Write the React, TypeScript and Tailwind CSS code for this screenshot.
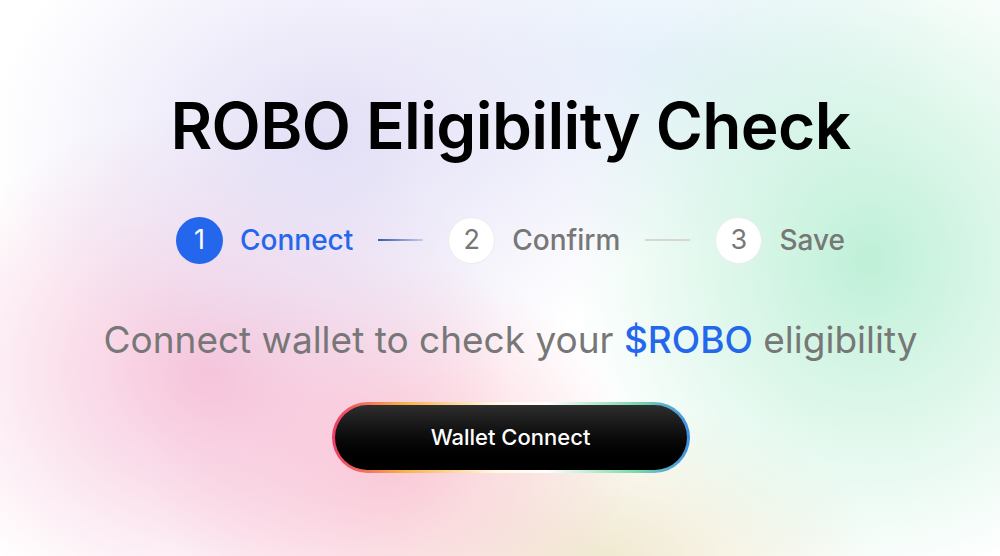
import React from "react";

const steps = [
  { n: 1, label: "Connect", active: true },
  { n: 2, label: "Confirm", active: false },
  { n: 3, label: "Save", active: false },
];

const App: React.FC = () => {
  return (
    <div
      className="relative w-full h-[556px] overflow-hidden bg-white"
      style={{ fontFamily: "Inter, 'Liberation Sans', sans-serif" }}
    >
      {/* soft colour blobs behind everything */}
      <div className="absolute inset-0 bg-[radial-gradient(ellipse_340px_260px_at_330px_140px,#e2def6_0%,rgba(226,222,246,0)_100%),radial-gradient(ellipse_300px_260px_at_210px_370px,#f6c3da_0%,rgba(246,195,218,0)_100%),radial-gradient(ellipse_240px_200px_at_390px_460px,#fbcad6_0%,rgba(251,202,214,0)_100%),radial-gradient(ellipse_300px_330px_at_870px_260px,#bff0d8_0%,rgba(191,240,216,0)_100%),radial-gradient(ellipse_280px_160px_at_600px_560px,#f0e9d0_0%,rgba(240,233,208,0)_100%),radial-gradient(ellipse_300px_200px_at_650px_60px,#e6f1fb_0%,rgba(230,241,251,0)_100%)]" />

      <div className="relative flex flex-col items-center pt-[86px] pl-[21px]">
        <h1 className="text-[64px] leading-[80px] font-semibold text-black tracking-[-0.6px]">
          ROBO Eligibility Check
        </h1>

        {/* stepper */}
        <div className="flex items-center mt-[50px] h-[48px]">
          {steps.map((s, i) => (
            <React.Fragment key={s.n}>
              <div className="flex items-center">
                <div
                  className={
                    s.active
                      ? "w-[47px] h-[47px] rounded-full bg-[#2567ec] text-white flex items-center justify-center text-[27px]"
                      : "w-[47px] h-[47px] rounded-full bg-white border border-[#ececec] text-[#777] flex items-center justify-center text-[27px]"
                  }
                >
                  {s.n}
                </div>
                <span
                  className={
                    s.active
                      ? "ml-[17px] text-[28px] font-medium text-[#2567ec]"
                      : "ml-[17px] text-[28px] font-medium text-[#777]"
                  }
                >
                  {s.label}
                </span>
              </div>
              {i < steps.length - 1 && (
                <div
                  className={
                    i === 0
                      ? "mx-[25px] w-[45px] h-[2px] bg-gradient-to-r from-[#3b5aa6] to-[#c4cdf0]"
                      : "mx-[25px] w-[45px] h-[2px] bg-[#d6d6d6]"
                  }
                />
              )}
            </React.Fragment>
          ))}
        </div>

        <p className="mt-[52px] text-[37px] leading-[48px] text-[#777]">
          Connect wallet to check your{" "}
          <span className="text-[#2567ec] font-medium">$ROBO</span> eligibility
        </p>

        {/* button with rainbow border */}
        <div className="mt-[38px] p-[3px] rounded-full bg-[linear-gradient(90deg,#ef3a6a_0%,#f7b14a_20%,#fff7e0_45%,#ffffff_60%,#7ad9a8_85%,#3e8ce6_100%)]">
          <button className="w-[352px] h-[65px] rounded-full bg-gradient-to-b from-[#2e2e2e] to-[#000] text-white text-[22px] font-medium">
            Wallet Connect
          </button>
        </div>
      </div>
    </div>
  );
};

export default App;
